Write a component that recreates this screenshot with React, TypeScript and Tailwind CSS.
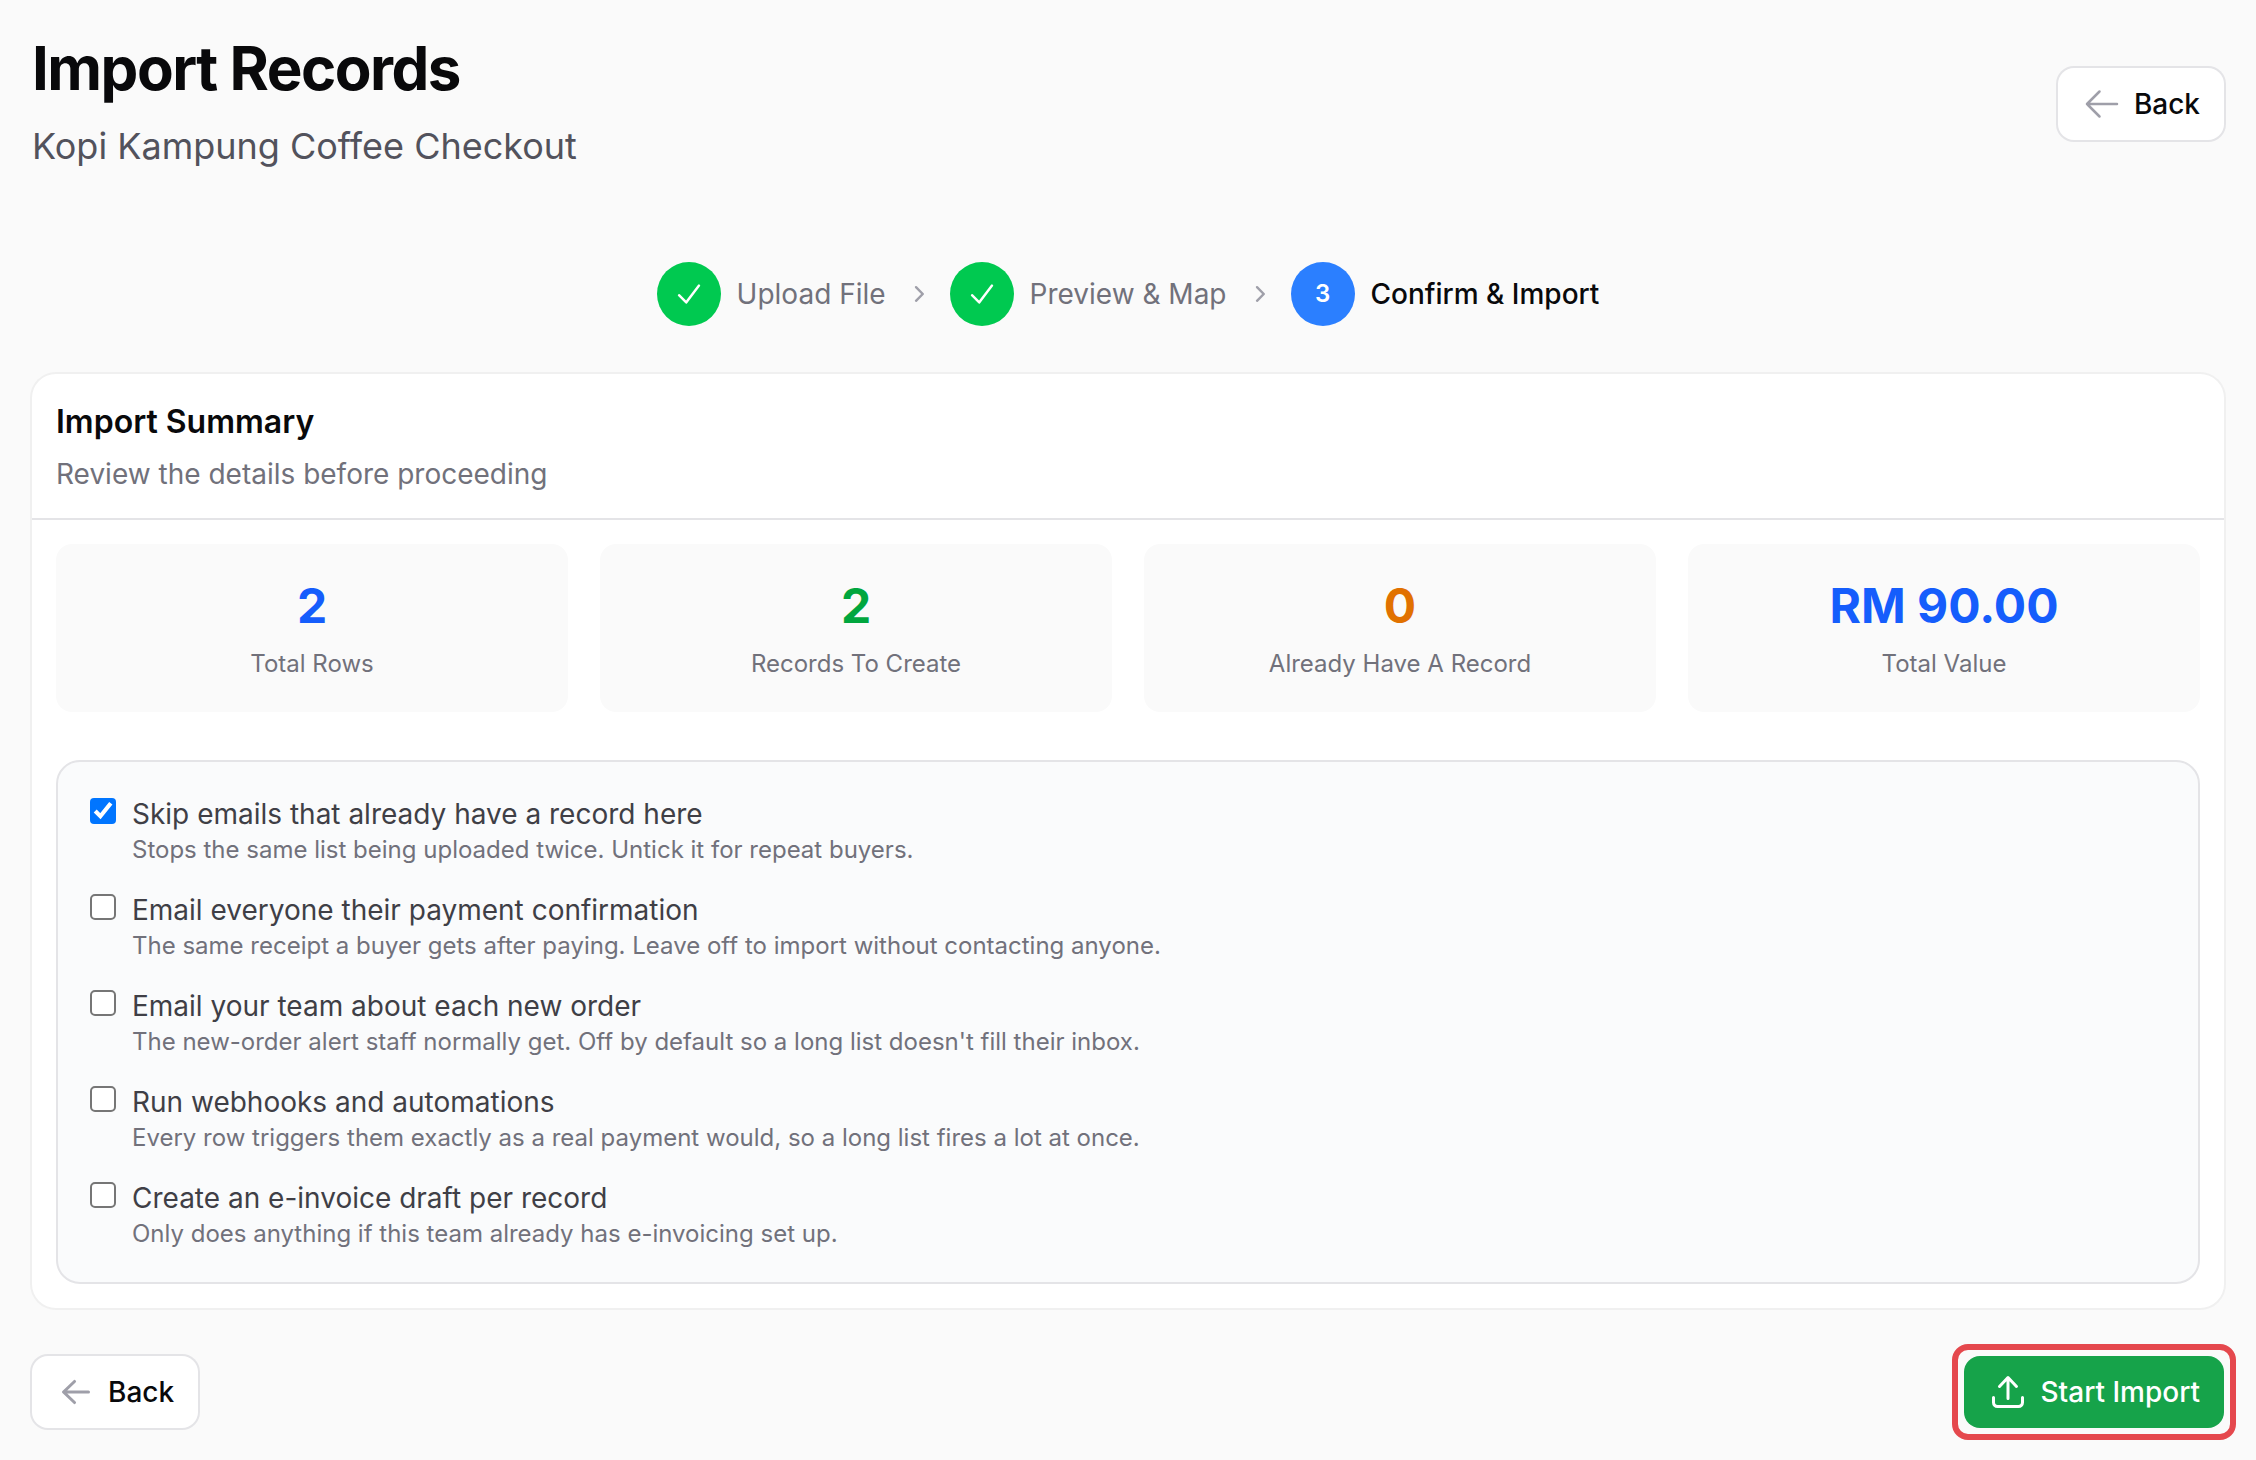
import React, { useState } from 'react';
import {
  HiMiniArrowLeft,
  HiMiniArrowUpTray,
  HiMiniCheck,
  HiMiniChevronRight,
  HiOutlineArrowLeft,
} from 'react-icons/hi2';

const STATS = [
  { label: 'Total Rows', value: '2', color: 'text-[#155dfc]' },
  { label: 'Records To Create', value: '2', color: 'text-[#00a63e]' },
  { label: 'Already Have A Record', value: '0', color: 'text-[#e17100]' },
  { label: 'Total Value', value: 'RM 90.00', color: 'text-[#155dfc]' },
];

const OPTIONS = [
  {
    id: 'skip-existing',
    title: 'Skip emails that already have a record here',
    hint: 'Stops the same list being uploaded twice. Untick it for repeat buyers.',
  },
  {
    id: 'email-buyers',
    title: 'Email everyone their payment confirmation',
    hint: 'The same receipt a buyer gets after paying. Leave off to import without contacting anyone.',
  },
  {
    id: 'email-team',
    title: 'Email your team about each new order',
    hint: "The new-order alert staff normally get. Off by default so a long list doesn't fill their inbox.",
  },
  {
    id: 'run-webhooks',
    title: 'Run webhooks and automations',
    hint: 'Every row triggers them exactly as a real payment would, so a long list fires a lot at once.',
  },
  {
    id: 'einvoice-draft',
    title: 'Create an e-invoice draft per record',
    hint: 'Only does anything if this team already has e-invoicing set up.',
  },
];

const DoneStep: React.FC<{ label: string }> = ({ label }) => (
  <li className="flex items-center gap-4">
    <span className="flex size-16 items-center justify-center rounded-full bg-[#00c950] text-white">
      <HiMiniCheck className="size-8" />
    </span>
    <span className="text-[#71717b]">{label}</span>
    <HiMiniChevronRight className="size-8 text-[#9f9fa9]" />
  </li>
);

const BackButton: React.FC<{ icon: React.ReactNode }> = ({ icon }) => (
  <button
    type="button"
    className="flex h-[72px] items-center gap-3 rounded-2xl bg-white px-6 text-[28px] leading-10 font-medium text-[#09090b] ring-2 ring-[#e4e4e7]"
  >
    {icon}
    Back
  </button>
);

const App: React.FC = () => {
  const [checked, setChecked] = useState<string[]>(['skip-existing']);

  const toggle = (id: string) =>
    setChecked(prev => (prev.includes(id) ? prev.filter(item => item !== id) : [...prev, id]));

  return (
    <div className="min-h-screen bg-[#fafafa] p-8 font-[Inter,sans-serif] text-[28px] leading-10 text-[#09090b]">
      {/* Header */}
      <header className="flex items-center justify-between">
        <div className="space-y-3">
          <h1 className="text-[60px] leading-[72px] font-bold tracking-tight">Import Records</h1>
          <p className="text-4xl leading-[60px] text-[#52525c]">Kopi Kampung Coffee Checkout</p>
        </div>
        <BackButton icon={<HiOutlineArrowLeft className="size-10 text-[#9f9fa9]" />} />
      </header>

      {/* Steps */}
      <ol className="mt-[86px] flex items-center justify-center gap-4">
        <DoneStep label="Upload File" />
        <DoneStep label="Preview &amp; Map" />
        <li className="flex items-center gap-4" aria-current="step">
          <span className="flex size-16 items-center justify-center rounded-full bg-[#2b7fff] text-2xl font-semibold text-white">
            3
          </span>
          <span className="font-medium">Confirm &amp; Import</span>
        </li>
      </ol>

      {/* Summary */}
      <section className="mt-12 rounded-3xl bg-white ring-2 ring-[#f0f0f0]">
        <div className="space-y-2 border-b-2 border-[#e4e4e7] p-6">
          <h2 className="text-[32px] leading-[48px] font-semibold">Import Summary</h2>
          <p className="text-[#71717b]">Review the details before proceeding</p>
        </div>

        <div className="space-y-12 p-6">
          <div className="grid grid-cols-4 gap-8">
            {STATS.map(stat => (
              <div key={stat.label} className="space-y-3 rounded-2xl bg-[#fafafa] p-8 text-center">
                <div className={`text-5xl leading-[60px] font-bold ${stat.color}`}>{stat.value}</div>
                <div className="text-2xl text-[#71717b]">{stat.label}</div>
              </div>
            ))}
          </div>

          <div className="space-y-6 rounded-3xl border-2 border-[#e4e4e7] bg-[#fafbfc] p-8">
            {OPTIONS.map(option => (
              <label key={option.id} htmlFor={option.id} className="flex items-start gap-4">
                <input
                  id={option.id}
                  type="checkbox"
                  checked={checked.includes(option.id)}
                  onChange={() => toggle(option.id)}
                  className="mt-0.5 size-[13px] shrink-0 [zoom:2]"
                />
                <span>
                  <span className="block text-[#3f3f46]">{option.title}</span>
                  <span className="block text-2xl text-[#71717b]">{option.hint}</span>
                </span>
              </label>
            ))}
          </div>
        </div>
      </section>

      {/* Actions */}
      <footer className="mt-12 flex items-center justify-between">
        <BackButton icon={<HiMiniArrowLeft className="size-10 text-[#9f9fa9]" />} />
        <div className="relative">
          <button
            type="button"
            className="flex h-[72px] items-center gap-3 rounded-2xl bg-[#16a34a] px-6 font-medium text-white"
          >
            <HiMiniArrowUpTray className="size-10" />
            Start Import
          </button>
          <span className="pointer-events-none absolute -inset-3 rounded-2xl border-6 border-[#e5484d]" />
        </div>
      </footer>
    </div>
  );
};

export default App;
